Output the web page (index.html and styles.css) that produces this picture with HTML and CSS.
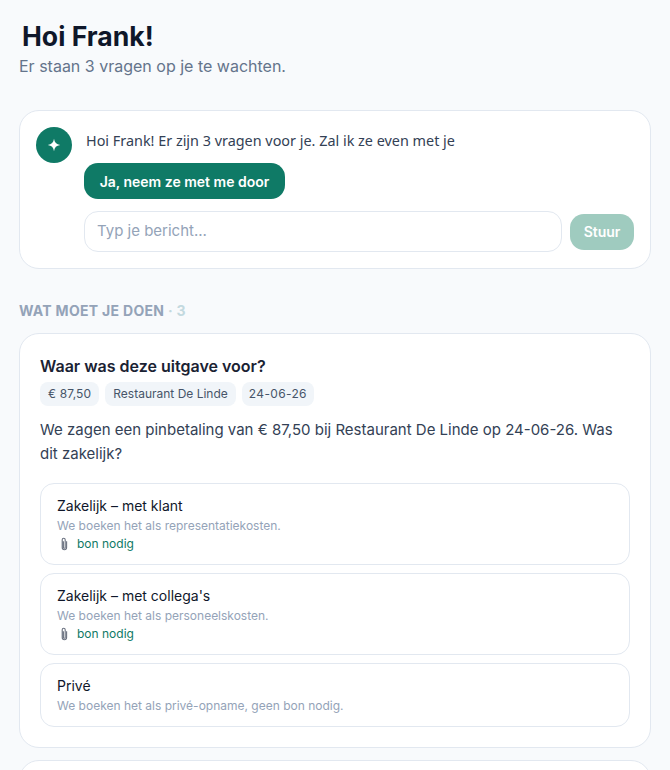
FILE: index.html
```html
<!DOCTYPE html>
<html lang="nl">
<head>
<meta charset="utf-8">
<title>Hoi Frank</title>
<link rel="stylesheet" href="styles.css">
</head>
<body>
<main class="page">
  <header class="head">
    <h1 class="title">Hoi Frank!</h1>
    <p class="subtitle">Er staan 3 vragen op je te wachten.</p>
  </header>

  <section class="assistant">
    <div class="assistant-top">
      <div class="avatar"><svg viewBox="0 0 14 14" width="14" height="14"><path class="spark" d="M7 .8C7.5 4.6 9.4 6.5 13.2 7 9.4 7.5 7.5 9.4 7 13.2 6.5 9.4 4.6 7.5.8 7 4.6 6.5 6.5 4.6 7 .8Z"/></svg></div>
      <p class="assistant-text">Hoi Frank! Er zijn 3 vragen voor je. Zal ik ze even met je</p>
    </div>
    <div class="assistant-body">
      <button class="primary">Ja, neem ze met me door</button>
      <div class="composer">
        <div class="input">Typ je bericht...</div>
        <button class="send">Stuur</button>
      </div>
    </div>
  </section>

  <h2 class="section">WAT MOET JE DOEN <span class="count">· 3</span></h2>

  <article class="card">
    <h3 class="card-title">Waar was deze uitgave voor?</h3>
    <div class="chips">
      <span class="chip amount">€ 87,50</span>
      <span class="chip">Restaurant De Linde</span>
      <span class="chip date">24-06-26</span>
    </div>
    <p class="lead">We zagen een pinbetaling van € 87,50 bij Restaurant De Linde op 24-06-26. Was dit zakelijk?</p>
    <div class="options">
      <div class="option">
        <div class="opt-title">Zakelijk – met klant</div>
        <div class="opt-desc">We boeken het als representatiekosten.</div>
        <div class="opt-note"><svg class="clip" viewBox="0 0 14 14" width="14" height="14"><path d="M6.4 4.2v6.2a.9.9 0 0 0 1.8 0V2.8a1.5 1.5 0 0 0-3 0v7.8a2.2 2.2 0 0 0 4.4 0V4.2"/></svg>bon nodig</div>
      </div>
      <div class="option">
        <div class="opt-title">Zakelijk – met collega's</div>
        <div class="opt-desc">We boeken het als personeelskosten.</div>
        <div class="opt-note"><svg class="clip" viewBox="0 0 14 14" width="14" height="14"><path d="M6.4 4.2v6.2a.9.9 0 0 0 1.8 0V2.8a1.5 1.5 0 0 0-3 0v7.8a2.2 2.2 0 0 0 4.4 0V4.2"/></svg>bon nodig</div>
      </div>
      <div class="option">
        <div class="opt-title">Privé</div>
        <div class="opt-desc">We boeken het als privé-opname, geen bon nodig.</div>
      </div>
    </div>
  </article>

  <article class="card next"></article>
</main>
</body>
</html>
```

FILE: styles.css
```css
* { box-sizing: border-box; }
html, body { margin: 0; height: 770px; overflow: hidden; }
body { background: #f8fafc; font-family: Inter, "Liberation Sans", sans-serif; color: #0f172a; }
.page { padding: 18px 19px 0; }
.head { margin-bottom: 32px; }
.title { margin: 0 0 0 3px; font-family: Inter, sans-serif; font-size: 26.6px; line-height: 36px; font-weight: 700; color: #0f172a; }
.subtitle { margin: 0; font-size: 16px; line-height: 24px; color: #64748b; }
.assistant { background: #fff; border: 1px solid #e2e8f0; border-radius: 20px; padding: 16px; height: 159px; }
.assistant-top { display: flex; gap: 14px; height: 36px; }
.avatar { width: 36px; height: 36px; border-radius: 50%; background: #0f7a66; display: flex; align-items: center; justify-content: center; flex: none; }
.spark { fill: #fff; }
.assistant-text { margin: 5px 0 0; font-family: "Noto Sans", sans-serif; font-size: 14.4px; line-height: 18px; color: #334155; }
.assistant-body { margin-left: 48px; }
.primary { display: block; width: 201px; height: 36px; border: 0; border-radius: 14px; background: #0f7a66; color: #fff; font: 600 14px Inter, sans-serif; }
.composer { display: flex; align-items: center; gap: 8px; margin-top: 12px; }
.input { flex: 1; height: 41px; border: 1px solid #e2e8f0; border-radius: 14px; padding: 0 12px; font-size: 15px; line-height: 38px; color: #94a3b8; background: #fff; }
.send { width: 64px; height: 36px; border: 0; border-radius: 14px; background: #9fcbbf; color: #fff; font: 600 14px Inter, sans-serif; }
.section { margin: 33px 0 14px; font-size: 14px; line-height: 17px; font-weight: 700; letter-spacing: .3px; color: #94a3b8; }
.count { color: #c3d9df; }
.card { background: #fff; border: 1px solid #e2e8f0; border-radius: 20px; padding: 20px; }
.card-title { margin: 1px 0 0; font-size: 16px; line-height: 22px; font-weight: 600; color: #1a2233; }
.chips { display: flex; gap: 6px; margin-top: 5px; }
.chip { height: 24px; padding: 0 8px; border-radius: 8px; background: #f1f5f9; font-size: 12px; line-height: 24px; color: #475569; }
.amount { letter-spacing: .15px; }
.date { padding: 0 7px; letter-spacing: .35px; }
.lead { margin: 12px 0 0; font-size: 15px; line-height: 24px; color: #334155; }
.options { display: flex; flex-direction: column; gap: 8px; margin-top: 17px; }
.option { border: 1px solid #e2e8f0; border-radius: 14px; padding: 13px 16px 12px; }
.opt-title { font-size: 14px; line-height: 18px; color: #0f172a; }
.opt-desc { margin-top: 3px; font-size: 12px; line-height: 16px; color: #94a3b8; }
.opt-note { display: flex; align-items: center; gap: 6px; margin-top: 2px; font-size: 12px; line-height: 16px; color: #0f7a66; }
.clip { fill: none; stroke: #6b7280; stroke-width: 1.1; flex: none; }
.next { margin-top: 12px; height: 60px; }
```
